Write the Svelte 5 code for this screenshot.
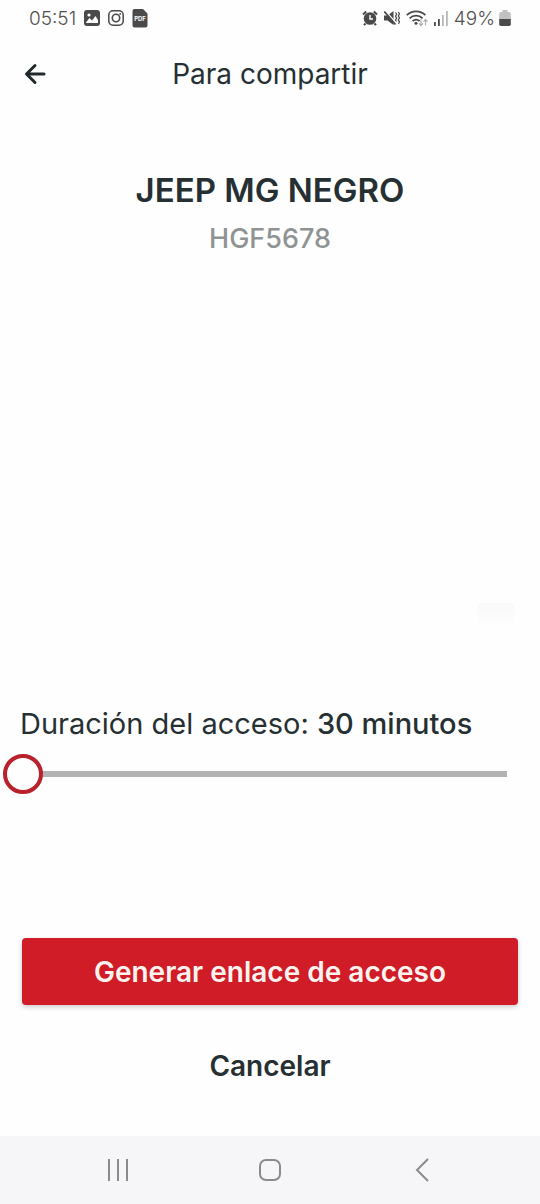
<script lang="ts">
    const durations = [30, 60, 120, 240, 480, 720, 1440];

    let vehicle = { name: "JEEP MG NEGRO", plate: "HGF5678" };
    let step = 0;

    $: minutes = durations[step];
    $: durationText = minutes < 60 ? `${minutes} minutos` : `${minutes / 60} horas`;
</script>

<div class="screen">
    <div class="status-bar">
        <div class="status-group left">
            <span>05:51</span>
            <svg width="16" height="16" viewBox="0 0 16 16">
                <rect width="16" height="16" rx="3" fill="#4a4a4a" />
                <circle cx="5" cy="5" r="1.6" fill="#fff" />
                <path d="M2 12.5 5.5 8l2.5 2.5L11.5 6l2.5 4v3H2z" fill="#fff" />
            </svg>
            <svg width="16" height="16" viewBox="0 0 16 16" fill="none" stroke="#4a4a4a">
                <rect x="0.8" y="0.8" width="14.4" height="14.4" rx="4.2" stroke-width="1.5" />
                <circle cx="8" cy="8" r="3.7" stroke-width="1.6" />
                <circle cx="12.2" cy="3.9" r="0.9" fill="#4a4a4a" stroke="none" />
            </svg>
            <svg width="16" height="20" viewBox="0 0 16 20">
                <path d="M2.5 1H11l4.5 4.5V17.5a2 2 0 0 1-2 2h-11a2 2 0 0 1-2-2V3a2 2 0 0 1 2-2z" fill="#4a4a4a" />
                <text class="pdf" x="8" y="13" text-anchor="middle">PDF</text>
            </svg>
        </div>
        <div class="status-group right">
            <svg width="16" height="16" viewBox="0 0 16 16">
                <circle cx="8" cy="8.5" r="6.3" fill="#4a4a4a" />
                <path d="M1 4.5 4.2 1.5M15 4.5l-3.2-3M3.5 13.5 2 15.2M12.5 13.5l1.5 1.7" stroke="#4a4a4a" stroke-width="2" />
                <path d="M8 5v4h3" stroke="#fff" stroke-width="1.4" fill="none" />
            </svg>
            <svg width="16" height="16" viewBox="0 0 16 16">
                <path d="M0 5.5h3.5L9.5 1v14L3.5 10.5H0z" fill="#4a4a4a" />
                <path d="M1.2 .8 12 13" stroke="#fff" stroke-width="1.4" />
                <path d="M.3 1.5 11.5 14.5" stroke="#4a4a4a" stroke-width="1.8" />
                <path d="M11.5 2.5l1.2 1.8-1.2 1.9 1.2 1.9-1.2 1.9 1 1.5M14.3 2l1.2 1.9-1.2 2 1.2 2-1.2 2 1.2 2-1 1.8" stroke="#4a4a4a" stroke-width="1.2" fill="none" />
            </svg>
            <svg width="22" height="18" viewBox="0 0 22 18" fill="none" stroke="#4a4a4a" stroke-width="1.8">
                <path d="M.8 6.2c5.2-5.1 13.4-5.1 18.6 0M3.6 9.4c3.6-3.6 9.4-3.6 13 0M6.6 12.2c2-2 5-2 7 0" />
                <circle cx="10" cy="14.2" r="1.5" fill="#4a4a4a" stroke="none" />
                <path d="M15 10v6.5m-2-2.2 2 2.2 2-2.2M19.5 16.5v-6m-2 2.2 2-2.2 2 2.2" stroke="#b0b0b0" stroke-width="1.2" />
            </svg>
            <svg width="14" height="16" viewBox="0 0 14 16">
                <path d="M0 12h1.8v4H0zM4 9h1.8v7H4z" fill="#4a4a4a" />
                <path d="M8 5h1.8v11H8zM12 1h1.8v15H12z" fill="#b8b8b8" />
            </svg>
            <span class="battery">49%
                <svg width="12" height="16" viewBox="0 0 12 16">
                    <path d="M3.5 0h5v2H10a1.8 1.8 0 0 1 1.8 1.8V10H.2V3.8A1.8 1.8 0 0 1 2 2h1.5z" fill="#c2c2c2" />
                    <path d="M.2 9h11.6v5.2A1.8 1.8 0 0 1 10 16H2a1.8 1.8 0 0 1-1.8-1.8z" fill="#4a4a4a" />
                </svg>
            </span>
        </div>
    </div>

    <header>
        <button class="back" aria-label="Volver">
            <svg width="22" height="22" viewBox="0 0 22 22" fill="none" stroke="#20292b" stroke-width="3" stroke-linecap="round" stroke-linejoin="round">
                <path d="M20 11H3M11 2.5 2.5 11l8.500 8.500" />
            </svg>
        </button>
        <h1>Para compartir</h1>
    </header>

    <main>
        <h2>{vehicle.name}</h2>
        <p class="plate">{vehicle.plate}</p>

        <div class="preview"></div>

        <label for="duration">Duración del acceso: <strong>{durationText}</strong></label>
        <input id="duration" type="range" min="0" max={durations.length - 1} bind:value={step} />

        <div class="actions">
            <button class="primary">Generar enlace de acceso</button>
            <button class="cancel">Cancelar</button>
        </div>
    </main>

    <nav>
        <button aria-label="Recientes">
            <svg width="24" height="24" viewBox="0 0 24 24" stroke="#8b8b8e" stroke-width="2">
                <path d="M3 1v22M12 1v22M21 1v22" />
            </svg>
        </button>
        <button aria-label="Inicio">
            <svg width="24" height="24" viewBox="0 0 24 24" fill="none" stroke="#8b8b8e" stroke-width="2">
                <rect x="2" y="2" width="20" height="20" rx="6" />
            </svg>
        </button>
        <button aria-label="Atrás">
            <svg width="24" height="24" viewBox="0 0 24 24" fill="none" stroke="#8b8b8e" stroke-width="2">
                <path d="M18 1 7 12l11 11" />
            </svg>
        </button>
    </nav>
</div>

<style>
    :global(body) {
        margin: 0;
        background: #fefefe;
    }

    .screen {
        --clr-text: #263033;
        --clr-primary: #cf1c26;
        min-height: 100vh;
        display: flex;
        flex-direction: column;
        color: var(--clr-text);
        font-family: Inter, "Liberation Sans", sans-serif;
    }

    h1,
    h2,
    p {
        margin: 0;
    }

    button {
        border: none;
        padding: 0;
        background: none;
        color: inherit;
        font-family: inherit;
        cursor: pointer;
    }

    svg {
        display: block;
        flex: none;
    }

    .status-bar {
        display: flex;
        justify-content: space-between;
        height: 36px;
        padding: 0 29px;
        color: #505050;
        font-size: 19px;
        font-weight: 300;
    }

    .status-group {
        display: flex;
        align-items: center;
        gap: 8px;
    }

    .right {
        gap: 6px;
    }

    .battery {
        display: flex;
        align-items: center;
        gap: 4px;
    }

    .pdf {
        fill: #fff;
        font-size: 6px;
        font-weight: 700;
    }

    header {
        display: grid;
        grid-template-columns: 48px 1fr 48px;
        align-items: center;
        height: 76px;
        padding: 0 11px;
    }

    .back {
        display: grid;
        place-items: center;
        height: 48px;
    }

    h1 {
        font-size: 28px;
        font-weight: 400;
        text-align: center;
    }

    main {
        flex: 1;
        display: flex;
        flex-direction: column;
        padding: 56px 22px 45px;
    }

    h2 {
        font-size: 33px;
        font-weight: 600;
        line-height: 44px;
        text-align: center;
    }

    .plate {
        margin-top: 10px;
        color: #8f9394;
        font-size: 27px;
        font-weight: 500;
        line-height: 34px;
        text-align: center;
    }

    .preview {
        flex: 1;
        min-height: 240px;
        margin-bottom: 77px;
        background: linear-gradient(#f9f9f9, #fefefe) right 4px bottom / 36px 24px no-repeat;
    }

    label {
        margin: 0 -2px;
        font-size: 29px;
        font-weight: 400;
        line-height: 40px;
    }

    strong {
        font-weight: 500;
    }

    /* the rail stops at the centre of the thumb on both ends */
    input[type="range"] {
        appearance: none;
        height: 40px;
        margin: 10px -9px 0 -19px;
        background: linear-gradient(#b3b3b3, #b3b3b3) center / calc(100% - 40px) 6px no-repeat;
    }

    input[type="range"]::-webkit-slider-thumb {
        appearance: none;
        box-sizing: border-box;
        width: 40px;
        height: 40px;
        border: 4px solid #b9222c;
        border-radius: 50%;
        background: #fefefe;
    }

    input[type="range"]::-moz-range-thumb {
        box-sizing: border-box;
        width: 40px;
        height: 40px;
        border: 4px solid #b9222c;
        border-radius: 50%;
        background: #fefefe;
    }

    .actions {
        display: flex;
        flex-direction: column;
        gap: 36px;
        margin-top: 144px;
    }

    .primary {
        height: 67px;
        border-radius: 4px;
        background: var(--clr-primary);
        box-shadow: 0 2px 5px rgba(0, 0, 0, 0.2);
        color: #fff3f0;
        font-size: 28px;
        font-weight: 600;
    }

    .cancel {
        align-self: center;
        height: 50px;
        padding: 0 24px;
        font-size: 28px;
        font-weight: 600;
    }

    nav {
        display: flex;
        justify-content: space-around;
        align-items: center;
        height: 68px;
        padding: 0 42px;
        background: #f6f6f9;
    }

    nav button {
        padding: 12px 24px;
    }
</style>
